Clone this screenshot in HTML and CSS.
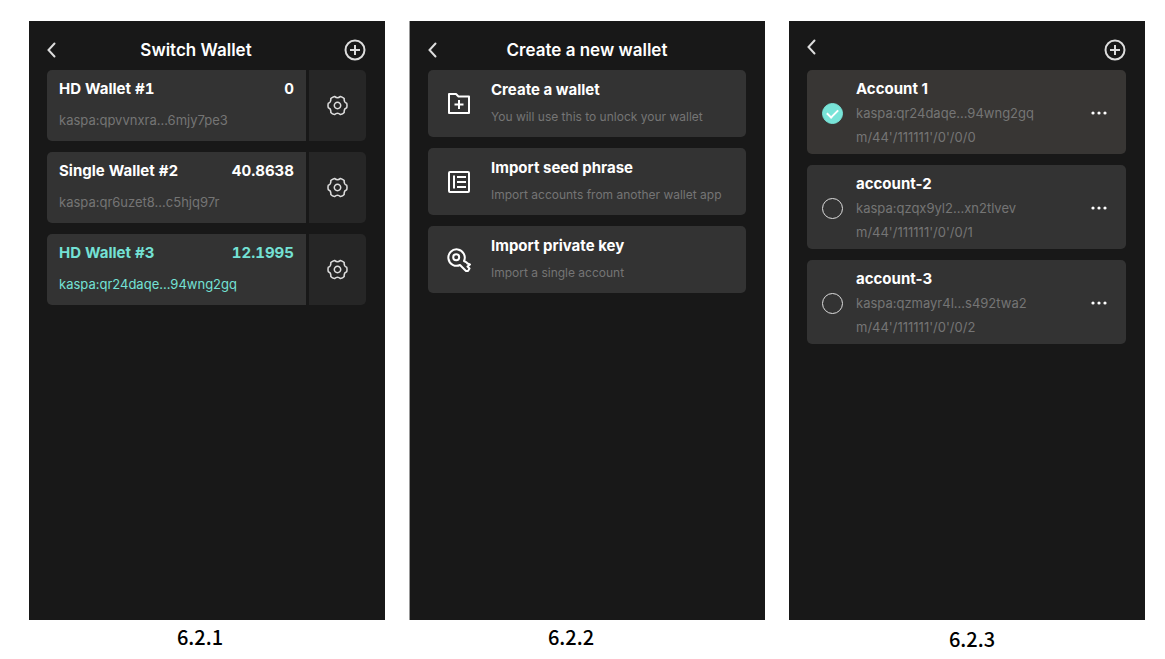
FILE: index.html
```html
<!DOCTYPE html>
<html lang="en">
<head>
    <meta charset="utf-8">
    <meta name="viewport" content="width=device-width, initial-scale=1">
    <title>Wallet</title>
    <link rel="stylesheet" href="styles.css">
</head>
<body>
<!-- shared icons -->
<svg class="sprite" aria-hidden="true">
    <symbol id="icon-back" viewBox="0 0 9 16"><path d="M7.5 1.5L1.5 8l6 6.500" fill="none" stroke="currentColor" stroke-width="2" stroke-linecap="round"/></symbol>
    <symbol id="icon-add" viewBox="0 0 22 22"><g fill="none" stroke="currentColor" stroke-width="2"><circle cx="11" cy="11" r="9.500"/><path d="M11 6v10M6 11h10"/></g></symbol>
    <symbol id="icon-gear" viewBox="-10.500 -10.500 22 22"><g fill="none" stroke="currentColor" stroke-width="1.500" stroke-linejoin="round"><path d="M9.200-2.200Q9.800 0 9.200 2.200C7 2.900 6.400 4.200 6.700 6.900Q5.200 8.600 3 9.100C1 7.300-1 7.300-3 9.100Q-5.200 8.600-6.700 6.900C-6.400 4.200-7 2.900-9.200 2.200Q-9.800 0-9.200-2.200C-7-2.900-6.400-4.200-6.700-6.900Q-5.200-8.600-3-9.100C-1-7.300 1-7.300 3-9.100Q5.200-8.600 6.700-6.900C6.400-4.200 7-2.900 9.200-2.200Z"/><circle r="3.200"/></g></symbol>
    <symbol id="icon-more" viewBox="0 0 16 4"><g fill="currentColor"><circle cx="2" cy="2" r="1.600"/><circle cx="8" cy="2" r="1.600"/><circle cx="14" cy="2" r="1.600"/></g></symbol>
</svg>
<main class="wrapper">
    <!-- wallet list -->
    <figure class="screen">
        <section class="panel">
            <header class="header header-add">
                <button class="icon-btn" aria-label="Back"><svg class="icon-back"><use href="#icon-back"/></svg></button>
                <h1 class="title">Switch Wallet</h1>
                <button class="icon-btn add" aria-label="Add wallet"><svg class="icon-add"><use href="#icon-add"/></svg></button>
            </header>
            <ul class="list">
                <li class="wallet">
                    <button class="wallet-main">
                        <span class="row"><b class="name">HD Wallet #1</b><b class="name">0</b></span>
                        <span class="text">kaspa:qpvvnxra...6mjy7pe3</span>
                    </button>
                    <button class="wallet-set" aria-label="Settings"><svg class="icon-gear"><use href="#icon-gear"/></svg></button>
                </li>
                <li class="wallet">
                    <button class="wallet-main">
                        <span class="row"><b class="name">Single Wallet #2</b><b class="name">40.8638</b></span>
                        <span class="text">kaspa:qr6uzet8...c5hjq97r</span>
                    </button>
                    <button class="wallet-set" aria-label="Settings"><svg class="icon-gear"><use href="#icon-gear"/></svg></button>
                </li>
                <li class="wallet on">
                    <button class="wallet-main">
                        <span class="row"><b class="name">HD Wallet #3</b><b class="name">12.1995</b></span>
                        <span class="text">kaspa:qr24daqe...94wng2gq</span>
                    </button>
                    <button class="wallet-set" aria-label="Settings"><svg class="icon-gear"><use href="#icon-gear"/></svg></button>
                </li>
            </ul>
        </section>
        <figcaption class="caption">6.2.1</figcaption>
    </figure>

    <!-- new wallet -->
    <figure class="screen">
        <section class="panel panel-edge">
            <header class="header">
                <button class="icon-btn" aria-label="Back"><svg class="icon-back"><use href="#icon-back"/></svg></button>
                <h1 class="title">Create a new wallet</h1>
            </header>
            <ul class="list">
                <li>
                    <button class="option">
                        <svg class="icon-option" viewBox="0 0 24 24" fill="none" stroke="currentColor" stroke-width="2" stroke-linejoin="round"><path d="M2 2h7l2.500 2.500H22V21H2z"/><path d="M12 8v9M7.500 12.500h9"/></svg>
                        <span class="option-text"><b class="name">Create a wallet</b><span class="text">You will use this to unlock your wallet</span></span>
                    </button>
                </li>
                <li>
                    <button class="option">
                        <svg class="icon-option" viewBox="0 0 24 24" fill="none" stroke="currentColor" stroke-width="2"><rect x="2" y="2" width="20" height="20" rx="1"/><path d="M7 5.500v13M10 7h9M10 12h9M10 17h9"/></svg>
                        <span class="option-text"><b class="name">Import seed phrase</b><span class="text">Import accounts from another wallet app</span></span>
                    </button>
                </li>
                <li>
                    <button class="option">
                        <svg class="icon-option" viewBox="0 0 24 24" fill="none" stroke="currentColor" stroke-width="2" stroke-linejoin="round"><path d="M17 13a8.200 8.200 0 1 0-4 4l6 6h2l1.500-2.500-2-2 2.500-2-2.500-1-1-1.200z"/><circle cx="9.200" cy="9.200" r="3"/></svg>
                        <span class="option-text"><b class="name">Import private key</b><span class="text">Import a single account</span></span>
                    </button>
                </li>
            </ul>
        </section>
        <figcaption class="caption caption-left">6.2.2</figcaption>
    </figure>

    <!-- account list -->
    <figure class="screen">
        <section class="panel">
            <header class="header header-add header-top">
                <button class="icon-btn" aria-label="Back"><svg class="icon-back"><use href="#icon-back"/></svg></button>
                <span></span>
                <button class="icon-btn add" aria-label="Add account"><svg class="icon-add"><use href="#icon-add"/></svg></button>
            </header>
            <ul class="list">
                <li class="account checked">
                    <input class="radio" type="radio" name="account" id="account1" checked>
                    <label class="account-text" for="account1"><b class="name">Account 1</b><span class="text">kaspa:qr24daqe...94wng2gq</span><span class="text">m/44'/111111'/0'/0/0</span></label>
                    <button class="icon-btn" aria-label="More"><svg class="icon-more"><use href="#icon-more"/></svg></button>
                </li>
                <li class="account">
                    <input class="radio" type="radio" name="account" id="account2">
                    <label class="account-text" for="account2"><b class="name">account-2</b><span class="text">kaspa:qzqx9yl2...xn2tlvev</span><span class="text">m/44'/111111'/0'/0/1</span></label>
                    <button class="icon-btn" aria-label="More"><svg class="icon-more"><use href="#icon-more"/></svg></button>
                </li>
                <li class="account">
                    <input class="radio" type="radio" name="account" id="account3">
                    <label class="account-text" for="account3"><b class="name">account-3</b><span class="text">kaspa:qzmayr4l...s492twa2</span><span class="text">m/44'/111111'/0'/0/2</span></label>
                    <button class="icon-btn" aria-label="More"><svg class="icon-more"><use href="#icon-more"/></svg></button>
                </li>
            </ul>
        </section>
        <figcaption class="caption caption-right">6.2.3</figcaption>
    </figure>
</main>
</body>
</html>
```

FILE: styles.css
```css
body,figure,ul,li,h1,button,input{margin: 0;padding: 0;}
*{box-sizing: border-box;}
ul,li{list-style: none;}
button{border: 0;background: none;color: inherit;font: inherit;text-align: left;cursor: pointer;}
svg{display: block;}
body{background: #fff;font-family: Inter,"Liberation Sans",sans-serif;}
.sprite{position: absolute;width: 0;height: 0;}

.wrapper{display: grid;grid-template-columns: repeat(3,1fr);gap: 24px;min-height: 100vh;padding: 21px 20px 0 29px;}
.screen{display: flex;flex-direction: column;}
.panel{flex: 1;padding: 0 19px 0 18px;background: #181818;color: #fff;}
.panel-edge{border-left: 1px solid #999;}
.caption{height: 39px;padding-right: 14px;font: 500 20px/34px "Noto Sans CJK SC",sans-serif;text-align: center;color: #000;}
.caption-left{padding-right: 32px;}
.caption-right{padding: 2px 0 0 10px;}

/* header */
.header{display: grid;grid-template-columns: 9px 1fr 9px;align-items: center;height: 49px;padding-top: 9px;}
.header-add{grid-template-columns: 9px 1fr 30px;}
.header-top{align-items: start;padding-top: 18px;}
.title{font-size: 17px;line-height: 24px;font-weight: 600;text-align: center;}
.icon-btn{color: #ddd;}
.add{justify-self: end;}
.icon-back{width: 9px;height: 16px;}
.icon-add{width: 22px;height: 22px;}

.list{display: grid;gap: 11px;}
.name{font-size: 15px;line-height: 24px;font-weight: 700;}
.text{font-size: 13px;line-height: 24px;font-weight: 400;color: #757575;}

/* wallets */
.wallet{display: flex;gap: 3px;border-radius: 5px;overflow: hidden;}
.wallet-main{display: grid;flex: 1;gap: 7px;padding: 7px 12px 9px;background: #333;}
.wallet-set{display: grid;place-items: center;width: 57px;background: #262626;color: #ddd;}
.row{display: flex;justify-content: space-between;font-variant-numeric: tabular-nums;}
.icon-gear{width: 22px;height: 22px;}
.on .wallet-main,
.on .text{color: #74e1d5;}

/* options */
.option{display: flex;align-items: center;gap: 20px;width: 100%;padding: 8px 19px;border-radius: 5px;background: #333;}
.option-text{display: grid;gap: 3px;}
.option .text{font-size: 12px;}
.icon-option{width: 24px;height: 24px;}

/* accounts */
.account{display: flex;align-items: center;gap: 13px;padding: 7px 19px 5px 15px;border-radius: 5px;background: #333;}
.checked{background: #383634;}
.account-text{display: grid;flex: 1;}
.account .icon-btn{color: #fff;}
.icon-more{width: 16px;height: 4px;}
.radio{display: grid;place-items: center;appearance: none;width: 21px;height: 21px;border: 1px solid #ddd;border-radius: 50%;}
.radio:checked{border-color: #78e4d8;background: #78e4d8;}
.radio:checked::before{content: "";width: 9px;height: 5px;margin-bottom: 2px;border: solid #fff;border-width: 0 0 2px 2px;transform: rotate(-45deg);}
```
